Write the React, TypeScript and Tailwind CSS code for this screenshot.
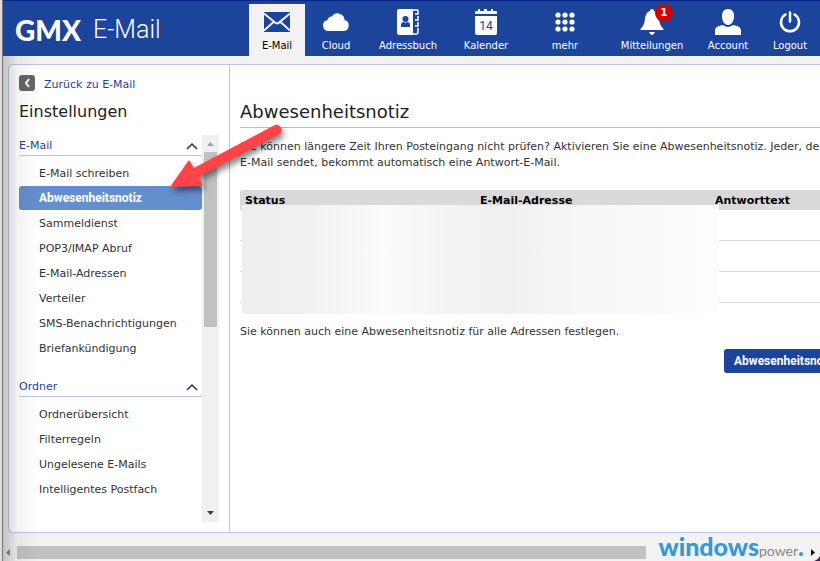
import type { ReactNode } from "react";

const mailItems = [
  "E-Mail schreiben",
  "Abwesenheitsnotiz",
  "Sammeldienst",
  "POP3/IMAP Abruf",
  "E-Mail-Adressen",
  "Verteiler",
  "SMS-Benachrichtigungen",
  "Briefankündigung",
];

const folderItems = ["Ordnerübersicht", "Filterregeln", "Ungelesene E-Mails", "Intelligentes Postfach"];

function MailIcon() {
  return (
    <svg width="26" height="20" viewBox="0 0 26 20" aria-hidden="true">
      <rect width="26" height="20" fill="#1c449b" />
      <path d="M0 1.500 11 10.600q2 1.600 4 0L26 1.500M0 18.500 9.500 10M26 18.500 16.500 10" fill="none" stroke="#f2f2f2" strokeWidth="2" />
    </svg>
  );
}

function CloudIcon() {
  return (
    <svg width="26" height="20" viewBox="0 0 26 20" fill="#fff" aria-hidden="true">
      <path d="M5.500 19a5.500 5.500 0 0 1-1-10.900A4.500 4.500 0 0 1 9 4.500 6.800 6.800 0 0 1 21.500 8 5.600 5.600 0 0 1 20.500 19Z" />
    </svg>
  );
}

function BookIcon() {
  return (
    <svg width="22" height="26" viewBox="0 0 22 26" aria-hidden="true">
      <path d="M2 0h14v26H2q-2 0-2-2V2q0-2 2-2Z" fill="#fff" />
      <path d="M16 1h4q1 0 1 1v3h-3M21 7v4h-3M21 13v4h-3M21 19v4q0 2-2 2h-3" fill="none" stroke="#fff" strokeWidth="1.500" />
      <circle cx="8.500" cy="10" r="3" fill="#1c449b" />
      <path d="M4 18v-2q0-3 3-3l1.500 1 1.500-1q3 0 3 3v2Z" fill="#1c449b" />
    </svg>
  );
}

function CalendarIcon() {
  return (
    <svg width="22" height="26" viewBox="0 0 22 26" aria-hidden="true">
      <path d="M0 5V3q0-1 1-1h2V0h2v2h4V0h3v2h4V0h2v2h3q1 0 1 1v2Z" fill="#fff" />
      <path d="M0 7h22v17q0 2-2 2H2q-2 0-2-2Z" fill="#fff" />
      <text x="11" y="21" textAnchor="middle" fontSize="12" fontFamily="Roboto, sans-serif" fill="#1c449b">
        14
      </text>
    </svg>
  );
}

function GridIcon() {
  const steps = [3, 10, 17];
  return (
    <svg width="20" height="21" viewBox="0 0 20 21" fill="#fff" aria-hidden="true">
      {steps.map((y) => steps.map((x) => <circle key={`${x}-${y}`} cx={x} cy={y} r="2.600" />))}
    </svg>
  );
}

function BellIcon() {
  return (
    <svg width="26" height="26" viewBox="0 0 26 26" fill="#fff" aria-hidden="true">
      <path d="M13 0q2 0 2 2 4.500 1.500 5 8 .5 6 4.500 10v1h-23v-1Q5.500 16 6 10q.5-6.500 5-8 0-2 2-2ZM10 23h6q-1 3-3 3t-3-3Z" />
    </svg>
  );
}

function AccountIcon() {
  return (
    <svg width="26" height="26" viewBox="0 0 26 26" fill="#fff" aria-hidden="true">
      <path d="M13 0c4 0 6 3 6 7 0 5-2.500 9-6 9s-6-4-6-9c0-4 2-7 6-7Z" />
      <path d="M0 26v-4q0-4 4-5l4-1q5 4 10 0l4 1q4 1 4 5v4Z" />
    </svg>
  );
}

function PowerIcon() {
  return (
    <svg width="22" height="22" viewBox="0 0 22 22" fill="none" stroke="#fff" strokeWidth="2.500" strokeLinecap="round" aria-hidden="true">
      <path d="M11 1.500v9M6.500 3.500a9 9 0 1 0 9 0" />
    </svg>
  );
}

function NavItem({ label, width, active, children }: { label: string; width: string; active?: boolean; children: ReactNode }) {
  return (
    <a
      href="#"
      className={`${width} flex flex-none flex-col items-center text-[10px] leading-3 ${
        active ? "bg-[#f2f2f2] text-black" : "text-white"
      }`}
    >
      <span className="relative flex h-9 items-center">{children}</span>
      {label}
    </a>
  );
}

function Section({ title, items, selected }: { title: string; items: string[]; selected?: string }) {
  return (
    <section>
      <h2 className="border-b border-[#b4c8e6]">
        <button type="button" className="flex h-5 w-full items-center justify-between pt-0.5 pr-1 text-[#1c449b]">
          {title}
          <svg width="12" height="8" viewBox="0 0 12 8" fill="none" stroke="#333" strokeWidth="1.500" aria-hidden="true">
            <path d="m1 7 5-5 5 5" />
          </svg>
        </button>
      </h2>
      <ul className="mt-[5px] flex flex-col gap-px">
        {items.map((item) => (
          <li key={item}>
            <a
              href="#"
              className={`block h-6 rounded-[3px] pl-5 ${
                item === selected
                  ? "bg-[#648fcf] font-[Roboto,sans-serif] text-xs leading-6 font-bold text-white"
                  : "pt-px leading-6 text-[#333]"
              }`}
            >
              {item}
            </a>
          </li>
        ))}
      </ul>
    </section>
  );
}

export default function App() {
  return (
    <div className="h-screen bg-[#dcdcdc] pl-0.5">
      <div className="relative flex h-full flex-col overflow-hidden border-l border-[#777] bg-[#f2f2f2] font-['DejaVu_Sans',Verdana,sans-serif] text-[11px] leading-4 text-[#333]">
        <header className="flex h-14 flex-none items-stretch border-t border-[#00218c] bg-[#1c449b] pt-[3px]">
          <a href="#" className="flex items-center gap-3 pl-3 text-white">
            <span className="font-[Lato,sans-serif] text-[28px] font-black">GMX</span>
            <span className="font-[Roboto,sans-serif] text-[25px] font-light">E-Mail</span>
          </a>
          <nav className="-mr-px ml-auto flex" aria-label="Hauptnavigation">
            <NavItem label="E-Mail" width="w-14" active><MailIcon /></NavItem>
            <NavItem label="Cloud" width="w-[62px]"><CloudIcon /></NavItem>
            <NavItem label="Adressbuch" width="w-[82px]"><BookIcon /></NavItem>
            <NavItem label="Kalender" width="w-[74px]"><CalendarIcon /></NavItem>
            <NavItem label="mehr" width="w-[84px]"><GridIcon /></NavItem>
            <NavItem label="Mitteilungen" width="w-[90px]">
              <BellIcon />
              <span className="absolute top-0 -right-2 size-[18px] rounded-full bg-[#d40000] text-center text-[10px] leading-[18px] font-bold">1</span>
            </NavItem>
            <NavItem label="Account" width="w-[62px]"><AccountIcon /></NavItem>
            <NavItem label="Logout" width="w-[62px]"><PowerIcon /></NavItem>
          </nav>
        </header>

        <div className="mt-2 ml-[5px] flex min-h-0 flex-1 rounded-l-[5px] border border-r-0 border-[#b4c8e6] bg-white">
          <aside className="flex w-[221px] flex-none flex-col border-r border-[#b4c8e6] p-[10px]">
            <a href="#" className="flex h-4 items-center gap-[9px] text-[#1c449b]">
              <span className="flex size-4 items-center justify-center rounded-[3px] bg-[#666]">
                <svg width="6" height="10" viewBox="0 0 6 10" fill="none" stroke="#fff" strokeWidth="2" aria-hidden="true">
                  <path d="M5 1 2 5l3 4" />
                </svg>
              </span>
              <span className="pt-1">Zurück zu E-Mail</span>
            </a>
            <h1 className="mt-[9px] mb-[11px] text-base leading-6 text-[#222]">Einstellungen</h1>
            <div className="flex min-h-0 flex-1">
              <nav className="flex min-w-0 flex-1 flex-col gap-4" aria-label="Einstellungen">
                <Section title="E-Mail" items={mailItems} selected="Abwesenheitsnotiz" />
                <Section title="Ordner" items={folderItems} />
              </nav>
              <div className="flex w-[17px] flex-none flex-col items-center bg-[#f0f0f0]" aria-hidden="true">
                <svg width="17" height="17" viewBox="0 0 17 17"><path d="M5 11h7L8.500 7Z" fill="#a0a0a0" /></svg>
                <div className="h-[175px] w-[13px] bg-[#c1c1c1]" />
                <svg className="mt-auto" width="17" height="17" viewBox="0 0 17 17"><path d="M5 6h7l-3.500 4Z" fill="#404040" /></svg>
              </div>
            </div>
          </aside>

          <main className="min-w-0 flex-1 overflow-hidden pt-[35px] pl-[10px]">
            <div className="min-w-[705px]">
              <h2 className="border-b border-[#b4bfe0] pb-[3px] text-lg leading-6 text-[#222]">Abwesenheitsnotiz</h2>
              <p className="mt-[11px] pr-10">
                Sie können längere Zeit Ihren Posteingang nicht prüfen? Aktivieren Sie eine Abwesenheitsnotiz. Jeder, der Ihnen eine{" "}
                <span className="whitespace-nowrap">E-Mail</span> sendet, bekommt automatisch eine Antwort-E-Mail.
              </p>
              <div className="relative mt-[19px]">
                <table className="w-full table-fixed border-separate border-spacing-0 text-left">
                  <thead>
                    <tr className="text-black">
                      <th className="h-5 rounded-tl-[3px] bg-[#d9d9d9] pt-0.5 pl-[5px] font-bold">Status</th>
                      <th className="bg-[#d9d9d9] pt-0.5 pl-[5px] font-bold">E-Mail-Adresse</th>
                      <th className="bg-[#d9d9d9] pt-0.5 pl-[5px] font-bold">Antworttext</th>
                    </tr>
                  </thead>
                  <tbody>
                    {[1, 2, 3].map((row) => (
                      <tr key={row} className="h-[31px]">
                        <td className="border-b border-[#d9d9d9]" />
                        <td className="border-b border-[#d9d9d9]" />
                        <td className="border-b border-[#d9d9d9]" />
                      </tr>
                    ))}
                  </tbody>
                </table>
                <div className="absolute top-[15px] left-[2px] h-[109px] w-[477px] bg-[linear-gradient(90deg,#eee_0%,#f0f0f0_12%,#fbfbfb_30%,#f3f3f3_44%,#f0f0f0_56%,#f7f7f7_72%,#fdfdfd_100%)]" />
              </div>
              <p className="mt-[21px]">Sie können auch eine Abwesenheitsnotiz für alle Adressen festlegen.</p>
              <div className="mt-[9px] flex justify-end">
                <button type="button" className="h-6 w-[221px] rounded-[3px] bg-[#1c449b] pl-[10px] text-left font-[Roboto,sans-serif] text-xs font-bold text-white">
                  Abwesenheitsnotiz festlegen
                </button>
              </div>
            </div>
          </main>
        </div>

        <div className="mt-[13px] mb-[2px] flex h-[13px] flex-none items-center" aria-hidden="true">
          <svg className="flex-none" width="14" height="13" viewBox="0 0 14 13"><path d="M7 3v7L3 6.500Z" fill="#888" /></svg>
          <div className="mr-[160px] h-[13px] flex-1 bg-[#c1c1c1]" />
          <svg className="flex-none" width="14" height="13" viewBox="0 0 14 13"><path d="M5 3v7l4-3.500Z" fill="#111" /></svg>
        </div>

        <div className="pointer-events-none absolute top-14 bottom-0 left-0 w-9 bg-linear-to-r from-black/20 via-black/5 via-40% to-transparent" />

        <svg className="pointer-events-none absolute top-[115px] left-[157px] drop-shadow-[2px_4px_3px_rgba(0,0,0,0.5)]" width="140" height="90" viewBox="160 115 140 90" aria-hidden="true">
          <path d="m170 187 19-27 5 8 80-42.500a5 5 0 0 1 5 9l-80 42.500 4 9Z" fill="#fe4446" />
        </svg>

        <div className="absolute right-4 -bottom-1 flex items-baseline font-[Lato,sans-serif]">
          <span className="text-[25px] leading-7 font-black text-[#3498db]">windows</span>
          <span className="text-sm leading-7 text-[#888]">power</span>
          <span className="text-[25px] leading-7 font-black text-[#3498db]">.</span>
        </div>
        <svg className="absolute right-0 bottom-0" width="6" height="5" viewBox="0 0 6 5" aria-hidden="true"><path d="M6 0v5H0q4-1 6-5Z" fill="#3b1a78" /></svg>
      </div>
    </div>
  );
}
